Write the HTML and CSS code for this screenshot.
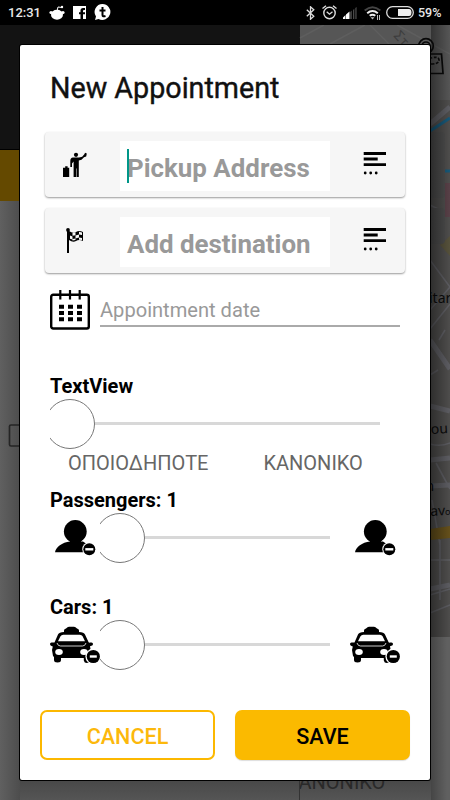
FILE: index.html
```html
<!DOCTYPE html>
<html lang="en">
<head>
<meta charset="utf-8">
<title>New Appointment</title>
<link rel="stylesheet" href="styles.css">
</head>
<body>
<svg class="defs" width="0" height="0" aria-hidden="true">
  <symbol id="menu" viewBox="0 0 24 24">
    <path d="M.7 1.500h22.300M.7 7h14M.7 12.700h22.300" stroke="#000" stroke-width="2.800"/>
    <circle cx="2.200" cy="21" r="1.400"/><circle cx="7.700" cy="21" r="1.400"/><circle cx="13.200" cy="21" r="1.400"/>
  </symbol>
  <symbol id="person" viewBox="0 0 50 50">
    <circle cx="25.300" cy="18.500" r="11.400"/>
    <path d="M20 26v2.500C12 29.500 6 34 5 39.300h32v-8l-4-2.800h-2v-3z"/>
    <circle cx="39.300" cy="36.300" r="7" fill="#fff"/><circle cx="39.300" cy="36.300" r="6"/>
    <path d="M35.300 36.300h8" stroke="#fff" stroke-width="2.400"/>
  </symbol>
  <symbol id="taxi" viewBox="0 0 50 50">
    <path d="M14 10.500q0-1.500 2-2 1.500-1.800 3-1.800h5q1.500 0 3 1.800 2 .5 2 2v1.500q5 0 6 2.500l3.500 7.500q.500 1 1.500.5h1.500q1.500 0 1.500 1.500t-1.500 1.800l-1.500.4.800 4.300v6l-1 4q-.5 2.500-3 2.500t-3-2.500v-2.500H11V40q0 2.500-3.500 2.500T4 40v-3l-1-1-1-6 .8-3.500-1.300-.5Q0 25.500 0 24t1.500-1.500H4.500L8 14.500Q9 12 14 12z"/>
    <path d="M13.300 14.800h16.500q2 0 2.800 1.500l2.400 5H8l2.500-5q.8-1.500 2.800-1.500z" fill="#fff"/>
    <path d="M7 23q.8 3 3.500 3h22q2.700 0 3.500-3" fill="none" stroke="#fff" stroke-width=".8"/>
    <ellipse cx="9" cy="32" rx="3.800" ry="2.900" fill="#fff"/><ellipse cx="34" cy="32" rx="3.800" ry="2.900" fill="#fff"/>
    <circle cx="43.300" cy="36.500" r="7.900" fill="#fff"/><circle cx="43.300" cy="36.500" r="6.600"/>
    <path d="M39.800 36.500h7" stroke="#fff" stroke-width="2.400"/>
  </symbol>
</svg>
<div class="screen">
  <svg class="backdrop" viewBox="0 0 450 800" aria-hidden="true">
    <defs>
      <linearGradient id="side"><stop offset="0" stop-color="#606060"/><stop offset="1" stop-color="#4d4d4d"/></linearGradient>
      <linearGradient id="edge"><stop offset="0" stop-color="#000" stop-opacity=".4"/><stop offset="1" stop-color="#000" stop-opacity="0"/></linearGradient>
      <linearGradient id="foot" x2="0" y2="1"><stop offset="0" stop-color="#484848"/><stop offset="1" stop-color="#555"/></linearGradient>
      <clipPath id="panel"><rect x="300" y="637" width="150" height="163"/></clipPath>
    </defs>
    <rect width="450" height="800" fill="#606060"/>
    <rect y="200" width="20" height="600" fill="url(#side)"/>
    <rect y="25" width="300" height="125" fill="#131313"/>
    <rect y="149" width="300" height="1.500" fill="#000"/>
    <rect y="150" width="20" height="51" fill="#644900"/>
    <rect x="300" y="25" width="150" height="612" fill="#4e4d4c"/>
    <rect x="300" y="25" width="150" height="75" fill="#565656"/>
    <path d="M300 38l24-13M330 44l35-19M370 25l20 20M397 25l53 29" stroke="#5e5e5e" stroke-width="1.500" fill="none"/>
    <text x="393" y="36" class="street" transform="rotate(48 393 36)">Στ</text>
    <g stroke="#5d5d62" fill="none" stroke-width="1.600">
      <path d="M430 205l20 10M430 260l20 27-20 23M430 329l20-25M430 375l8-5M439 340l6-10M430 444q10 3 20-1M436 463l14 26M432 500l8 45M440 540v60M430 560h20M430 595l20-6M430 613l20-8"/>
      <path d="M430 124l20-17M430 340l20 29M430 406l20 5M430 460l20-2M430 486l20-1M430 589l20-4" stroke-width="5"/>
    </g>
    <path d="M430 131l20-13M445 171h5" stroke="#175878" stroke-width="3" fill="none"/>
    <path d="M445 183h5v34h-5z" fill="#584047"/>
    <path d="M440 245l10-9v20z" fill="#56513b"/>
    <path d="M430 529l20-3v12l-20 2z" fill="#65501b"/>
    <rect x="420" y="132" width="25" height="66" rx="4" fill="#4b4b4b"/>
    <rect x="420" y="208" width="25" height="36" rx="4" fill="#4b4b4b"/>
    <g class="town"><text x="429" y="303">itar</text><text x="431" y="434" transform="rotate(-3 431 434)">ou</text><text x="425.500" y="491">n</text><text x="430.500" y="516" transform="rotate(-3 430 516)">av</text><text x="445" y="515" class="last">o</text></g>
    <rect x="431" y="25" width="19" height="612" fill="url(#edge)"/>
    <rect x="300" y="637" width="150" height="163" fill="#606060"/>
    <rect x="431" y="637" width="16" height="163" fill="url(#edge)" opacity=".7"/>
    <rect y="780" x="20" width="411" height="20" fill="url(#foot)"/>
    <rect x="299" y="780" width="1" height="20" fill="#333"/>
    <g clip-path="url(#panel)"><text x="286" y="789" class="ghost">ΚΑΝΟΝΙΚΟ</text></g>
    <rect x="9.500" y="425" width="20" height="21" rx="1.500" fill="none" stroke="#252525" stroke-width="1.700"/>
    <g fill="none" stroke="#080808" stroke-width="1.700"><circle cx="426" cy="46" r="7.300"/><circle cx="426" cy="46" r="4"/><path d="M428 54h13.500l1.500 19.500h-15"/><path d="M431 64q8 0 8-4t-8-2" stroke-dasharray="3 1.500"/></g>
  </svg>

  <header class="status">
    <span class="time">12:31</span>
    <svg class="s-reddit" viewBox="0 0 16 16"><ellipse cx="8" cy="9.700" rx="6" ry="5"/><circle cx="2" cy="7.500" r="1.600"/><circle cx="14" cy="7.500" r="1.600"/><path d="M8 6l1-4 4 .5" fill="none" stroke="#fff"/><circle cx="13" cy="2" r="1.200"/></svg>
    <svg class="s-fb" viewBox="0 0 13 13"><path d="M0 0h13v13h-3V8.300h2V6.200h-2V5q0-1 1-1h1V2h-2q-2.500 0-2.500 2.500v1.700H6v2.100h1.500V13H0z"/></svg>
    <svg class="s-chat" viewBox="0 0 17 17"><path d="M8.500 0a8 8 0 1 1-4 15L1 16l1-3.500A8 8 0 0 1 8.500 0z"/><path d="M8.500 3v8q0 2 3 1M5.500 6.500h6" fill="none" stroke="#000" stroke-width="2"/></svg>
    <span class="grow"></span>
    <svg class="s-bt" viewBox="0 0 9 14"><path d="M.8 3.700l7 6.600L4.500 13.200V.8l3.300 2.900-7 6.600" fill="none" stroke="#ddd" stroke-width="1.300"/></svg>
    <svg class="s-alarm" viewBox="0 0 15 15"><g fill="none" stroke="#ddd" stroke-width="1.400"><circle cx="7.500" cy="8" r="5.700"/><path d="M.5 3.500L4 .8M14.500 3.500L11 .8M4.700 6.800L7.500 9.200l3-2.400"/></g></svg>
    <svg class="s-signal" viewBox="0 0 14 12"><path d="M0 10.500L2.500 8v4H0zM3 7.500L6.500 4.500V12H3z" fill="#fff"/><path d="M7.200 5l1.600-1.500V12H7.200zM10 3l1.300-1.200V12H10zM12.300 1L13.600 0v12h-1.300z" fill="#4a4a4a"/></svg>
    <svg class="s-wifi" viewBox="0 0 17 14"><g fill="none" stroke-width="2"><path d="M.7 4.500Q8.500-2 16.300 4.500" stroke="#444"/><path d="M3.200 7.200q5.300-4.400 10.600 0" stroke="#eee"/><path d="M5.700 9.800q2.800-2.200 5.600 0" stroke="#eee"/></g><path d="M6.500 11.200h4l-2 2.300zM13 9h1v5h-1zM15 9h1v5h-1z" fill="#bbb"/></svg>
    <svg class="s-batt" viewBox="0 0 28 13"><rect x=".7" y=".7" width="26.600" height="11.600" rx="5.800" fill="none" stroke="#ddd" stroke-width="1.300"/><path d="M12 3h11q2.500 0 2.500 3.500T23 10H12z" fill="#eee"/></svg>
    <span class="pct">59%</span>
  </header>

  <main class="dialog">
    <h1>New Appointment</h1>
    <div class="card">
      <svg class="lead" viewBox="0 0 24 26"><circle cx="13" cy="2.800" r="2.100"/><path d="M10 5.500h6l3.200-.8 2.300-2.700L22 .8l1.800.7-.6 3-2.200.7-2.500 2.600-2.700.7V25h-2.200v-8.500h-.5V25h-2.500V9.500L9 11.500V15H7.300V9q0-3.500 2.700-3.500zM0 15.800h2.200v-1.600h2.400v1.600h1.600V25H0z"/></svg>
      <div class="field"><span class="caret"></span>Pickup Address</div>
      <svg class="menu"><use href="#menu"/></svg>
    </div>
    <div class="card">
      <svg class="lead" viewBox="0 0 24 26"><circle cx="5" cy="2" r="1.900"/><path d="M4 2h2v23H4zM6 3q4 3 7 1t7 0v9q-4-2-7 0t-7-1z"/><g fill="#f6f6f6"><path d="M9.500 4.700l3-.4v3l-3 .4zM16 3.700l3 .7v2.700l-3-.5zM7 7.500l2.500 1v3L7 10.700zM12.500 7.500l3.500-1v3l-3.500 1zM16 9.500l3 .5v2l-3-.2zM9.500 11l3-.6v1.700l-3 .5z"/></g></svg>
      <div class="field">Add destination</div>
      <svg class="menu"><use href="#menu"/></svg>
    </div>
    <div class="date">
      <svg viewBox="0 0 40 40"><rect x="1.200" y="4.700" width="37.600" height="33.800" rx="2" fill="none" stroke="#000" stroke-width="2.400"/><path d="M10.300 0v9.500M20 0v9.500M29.700 0v9.500" stroke="#000" stroke-width="2.200"/><path d="M9 16.700h23M9 23h23M9 29.200h23" stroke="#000" stroke-width="4" stroke-dasharray="5 4"/></svg>
      <div class="date-input">Appointment date</div>
    </div>
    <h2 class="l-type">TextView</h2>
    <div class="slider wide"><span class="clip"><i></i></span><b></b></div>
    <div class="types"><span>ΟΠΟΙΟΔΗΠΟΤΕ</span><span>ΚΑΝΟΝΙΚΟ</span></div>
    <h2 class="l-pass">Passengers: 1</h2>
    <div class="counter">
      <svg><use href="#person"/></svg>
      <div class="slider"><span class="clip"><i></i></span><b></b></div>
      <svg><use href="#person"/></svg>
    </div>
    <h2 class="l-cars">Cars: 1</h2>
    <div class="counter">
      <svg><use href="#taxi"/></svg>
      <div class="slider"><span class="clip"><i></i></span><b></b></div>
      <svg><use href="#taxi"/></svg>
    </div>
    <div class="actions"><button class="cancel">CANCEL</button><button class="save">SAVE</button></div>
  </main>
</div>
</body>
</html>
```
FILE: styles.css
```css
* { box-sizing: border-box; }
body { margin: 0; font-family: Roboto, "Liberation Sans", sans-serif; }
.defs { position: absolute; }
svg { display: block; flex: none; }
.screen { position: relative; width: 450px; height: 800px; overflow: hidden; background: #606060; }
.backdrop { position: absolute; inset: 0; width: 450px; height: 800px; }
.street { font-size: 14px; fill: #3d3d3d; }
.town { font-family: "Noto Sans", sans-serif; font-size: 14px; fill: #0b0b0b; }
.town .last { font-size: 9px; }
.ghost { font-size: 20px; fill: #292929; }

.status { position: relative; display: flex; align-items: center; height: 25px; padding: 0 8px; background: #000; color: #e8e8e8; fill: #fff; }
.time { width: 32px; font-size: 13px; font-weight: 500; }
.s-reddit { width: 16px; height: 16px; margin-left: 9px; }
.s-fb { width: 13px; height: 13px; margin-left: 8px; }
.s-chat { width: 17px; height: 17px; margin-left: 8px; }
.grow { flex: 1; }
.s-bt { width: 9px; height: 14px; }
.s-alarm { width: 15px; height: 15px; margin-left: 7px; }
.s-signal { width: 14px; height: 12px; margin-left: 6px; }
.s-wifi { width: 17px; height: 14px; margin-left: 7px; }
.s-batt { width: 28px; height: 13px; margin-left: 5px; }
.pct { width: 23px; margin: 0 1px 0 4px; font-size: 12.5px; font-weight: 500; }

.dialog { position: relative; display: flex; flex-direction: column; width: 410px; height: 735px; margin: 20px 0 0 20px; padding: 0 20px; background: #fff; border-radius: 2px; box-shadow: 0 0 0 1px #000; }
h1 { margin: 0 0 0 10px; height: 87px; line-height: 87px; font-size: 28.7px; font-weight: 400; color: #111; -webkit-text-stroke: .4px #111; white-space: nowrap; }
.card { display: flex; align-items: center; height: 65px; margin: 0 5px 11px; padding: 0 18px; border-radius: 4px; background: #f6f6f6; box-shadow: 0 1px 2px rgba(0,0,0,.4); }
.lead { width: 24px; height: 26px; }
.field { position: relative; width: 210px; height: 50px; margin: 2px 0 0 33px; padding-left: 7px; background: #fff; color: #999; font-size: 25.9px; font-weight: 700; line-height: 54px; white-space: nowrap; }
.caret { position: absolute; left: 7px; top: 8px; width: 2px; height: 34px; background: #009688; }
.menu { width: 24px; height: 24px; margin: 0 0 2px 33px; }
.date { display: flex; height: 40px; margin: 6px 10px 0; gap: 10px; }
.date svg { width: 40px; height: 40px; }
.date-input { width: 300px; height: 37px; line-height: 41px; border-bottom: 2px solid #aaa; color: #999; font-size: 20.1px; }
h2 { margin: 0 0 0 10px; font-size: 20px; line-height: 26px; height: 26px; font-weight: 700; color: #000; }
.l-type { margin-top: 43px; }
.slider { display: flex; align-items: center; width: 230px; height: 50px; }
.slider.wide { width: 330px; margin-left: 10px; }
.clip { width: 45px; height: 50px; overflow: hidden; display: flex; justify-content: flex-end; }
.clip i { flex: none; width: 50px; height: 50px; border: 1px solid #777; border-radius: 50%; }
.slider b { flex: 1; height: 3px; margin-bottom: 1px; background: #d8d8d8; }
.types { display: flex; gap: 55px; height: 28px; line-height: 28px; margin-left: 28px; font-size: 20px; color: #666; }
.l-pass { margin-top: 10px; }
.counter { display: flex; height: 50px; margin-left: 10px; }
.counter > svg { width: 50px; height: 50px; }
.counter .slider { margin-right: 20px; }
.l-cars { margin-top: 31px; }
.actions { display: flex; gap: 20px; margin-top: 40px; }
button { width: 175px; height: 50px; padding: 2px 0 0; border-radius: 7px; font: 500 21.6px Roboto, sans-serif; }
.cancel { background: #fff; color: #fcb80b; border: 2px solid #fcb800; }
.save { background: #fbba00; color: #000; border: 0; box-shadow: 0 1px 1px #ddd; }
```
